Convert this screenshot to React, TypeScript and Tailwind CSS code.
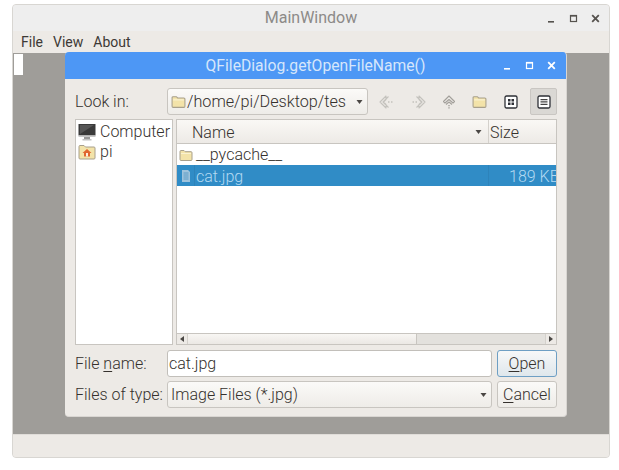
import React from "react";

const Folder = ({ className = "" }: { className?: string }) => (
  <svg viewBox="0 0 14 14" className={className}>
    <path d="M1 3.500 a1 1 0 0 1 1-1h3l1.200 1.200h5.800a1 1 0 0 1 1 1v6.800a1 1 0 0 1-1 1H2a1 1 0 0 1-1-1z" fill="#f3e3a9" stroke="#a8a08c" strokeWidth="1" />
    <path d="M2 5h10v1H2z" fill="#faf2d0" />
  </svg>
);

const WinBtns = ({ light }: { light?: boolean }) => {
  const c = light ? "#ffffff" : "#55524e";
  return (
    <div className="flex items-center gap-[13px]">
      <svg width="9" height="9" viewBox="0 0 9 9"><rect x="1" y="7" width="6" height="1.600" fill={c} /></svg>
      <svg width="9" height="9" viewBox="0 0 9 9"><rect x="1.500" y="1.500" width="6" height="6" fill="none" stroke={c} strokeWidth="1.200" /><rect x="1" y="1" width="7" height="1.600" fill={c} /></svg>
      <svg width="9" height="9" viewBox="0 0 9 9"><path d="M1.200 1.200 7.800 7.800M7.800 1.200 1.200 7.800" stroke={c} strokeWidth="1.800" /></svg>
    </div>
  );
};

const Caret = () => (
  <svg width="7" height="4" viewBox="0 0 7 4"><path d="M0.500 0h6L3.500 4z" fill="#4a4744" /></svg>
);

const Slot = ({ children }: { children: React.ReactNode }) => (
  <div className="w-[31px] shrink-0 flex items-center justify-center">{children}</div>
);

export default function App() {
  return (
    <div className="w-[619px] h-[470px] bg-white relative overflow-hidden text-[16px] font-light text-[#35312d] font-['Roboto',sans-serif] leading-none">
      <div className="absolute left-[12px] top-[4px] w-[598px] h-[454px] flex flex-col rounded-[4px] border border-[#d8d6d2] overflow-hidden bg-[#edeae6]">
        <div className="h-[26px] shrink-0 bg-[#eeeeee] relative flex items-center justify-center text-[#8c8a88] font-normal">
          MainWindow
          <div className="absolute right-[9px] top-[9px]"><WinBtns /></div>
        </div>
        <div className="h-[22px] shrink-0 flex items-center gap-[10px] pl-[8px] text-[14px] font-normal text-[#3d3935]">
          <span>File</span><span>View</span><span>About</span>
        </div>
        <div className="flex-1 bg-[#9f9d99]">
          <div className="w-[9px] h-[21px] bg-white ml-[1px] mt-px" />
        </div>
        <div className="h-[23px] shrink-0 bg-[#edeae6] border-t border-[#e0ddd9]" />
      </div>

      <div className="absolute left-[65px] top-[52px] w-[502px] h-[365px] flex flex-col rounded-[4px] overflow-hidden bg-[#edeae6] border-b border-r border-[#d9d6d2]">
        <div className="h-[27px] shrink-0 bg-[#4d97f5] relative flex items-center justify-center text-[#d6e6fb] font-normal text-[15.700px]">
          QFileDialog.getOpenFileName()
          <div className="absolute right-[10px] top-[9px]"><WinBtns light /></div>
        </div>
        <div className="flex-1 flex flex-col pl-[10px] pr-[9px] pt-[9px]">
          <div className="h-[27px] flex items-center shrink-0">
            <span className="w-[92px] shrink-0 pt-px">Look in:</span>
            <div className="w-[201px] shrink-0 h-[27px] rounded-[3px] border border-[#c8c5c0] bg-gradient-to-b from-[#fbfaf8] to-[#eeece8] flex items-center pl-[3px] pr-[4px]">
              <Folder className="w-[15px] h-[15px] shrink-0" />
              <span className="flex-1 pt-px ml-px text-[16.200px]">/home/pi/Desktop/tes</span>
              <Caret />
            </div>
            <div className="flex items-center pl-[3px]">
              <Slot>
                <svg width="16" height="14" viewBox="0 0 16 14" fill="#edeae6" stroke="#c4c2bd" strokeWidth="1.100" strokeLinejoin="round">
                  <path d="M7 1 1 7l6 6V9.500l-2.500-2.500L7 4.500zM9.500 1.500 4 7l5.500 5.500" fill="none" />
                  <path d="M9 7h1.500M12 7h1.500" strokeWidth="1.500" />
                </svg>
              </Slot>
              <Slot>
                <svg width="16" height="14" viewBox="0 0 16 14" fill="none" stroke="#c4c2bd" strokeWidth="1.100" strokeLinejoin="round">
                  <path d="M9 1l6 6-6 6V9.500L11.500 7 9 4.500zM6.500 1.500 12 7l-5.500 5.500" />
                  <path d="M7 7H5.500M4 7H2.500" strokeWidth="1.500" />
                </svg>
              </Slot>
              <Slot>
                <svg width="14" height="14" viewBox="0 0 14 14" fill="none" stroke="#a3a09b" strokeWidth="1.100" strokeLinejoin="round">
                  <path d="M7 1 1.500 6.500 3 8 7 4.500 11 8l1.500-1.500z" />
                  <path d="M4 9.500 7 7l3 2.500" />
                  <path d="M7 10v1.300M7 12.300V13.500" strokeWidth="1.400" />
                </svg>
              </Slot>
              <Slot><Folder className="w-[15px] h-[15px]" /></Slot>
              <Slot>
                <svg width="14" height="14" viewBox="0 0 14 14"><rect x="1" y="1" width="12" height="12" rx="1.500" fill="#fff" stroke="#2e3036" strokeWidth="1.300" /><path d="M4 4h2.500v2.500H4zM7.500 4H10v2.500H7.500zM4 7.500h2.500V10H4zM7.500 7.500H10V10H7.500z" fill="#2e3036" /></svg>
              </Slot>
              <div className="w-[27px] h-[27px] ml-[4px] shrink-0 rounded-[2px] bg-[#dad8d4] border border-[#c9c6c2] flex items-center justify-center">
                <svg width="14" height="14" viewBox="0 0 14 14"><rect x="1" y="1" width="12" height="12" rx="1.500" fill="#fff" stroke="#2e3036" strokeWidth="1.300" /><path d="M3.500 4h7v1.300h-7zM3.500 6.300h7v1.300h-7zM3.500 8.700h7V10h-7z" fill="#444" /></svg>
              </div>
            </div>
          </div>

          <div className="h-[226px] flex gap-[3px] mt-[4px] shrink-0">
            <div className="w-[98px] shrink-0 bg-white border border-[#c8c5c0] pl-[2px] pt-[2px]">
              <div className="flex items-center h-[20px] gap-[4px]">
                <svg width="18" height="18" viewBox="0 0 18 18" className="shrink-0">
                  <rect x="0.500" y="1" width="17" height="11.500" fill="#3a3a3a" />
                  <path d="M2 2h14L2 11z" fill="#565656" />
                  <rect x="0.500" y="12.500" width="17" height="1.500" fill="#c9c9c9" />
                  <rect x="6" y="14" width="6" height="2" fill="#9a9a9a" />
                  <rect x="4.500" y="16" width="9" height="1.500" fill="#c2c2c2" />
                </svg>
                <span>Computer</span>
              </div>
              <div className="flex items-center h-[20px] gap-[4px]">
                <svg width="18" height="16" viewBox="0 0 18 16" className="shrink-0">
                  <path d="M1 2.500a1 1 0 0 1 1-1h4l1.500 1.500H16a1 1 0 0 1 1 1V14a1 1 0 0 1-1 1H2a1 1 0 0 1-1-1z" fill="#f3e3a9" stroke="#a8a08c" />
                  <path d="M9 5 4.500 9H6v3.500h6V9h1.500z" fill="#e0662f" />
                  <rect x="8" y="9" width="2" height="3.500" fill="#fbeede" />
                </svg>
                <span>pi</span>
              </div>
            </div>
            <div className="flex-1 min-w-0 bg-white border border-[#c8c5c0] flex flex-col">
              <div className="h-[24px] shrink-0 flex bg-gradient-to-b from-[#faf8f5] to-[#edeae6] border-b border-[#c8c5c0]">
                <div className="w-[312px] shrink-0 flex items-center justify-between pl-[15px] pr-[6px] border-r border-[#d4d1cc]">
                  <span className="pt-[2px]">Name</span>
                  <Caret />
                </div>
                <div className="flex items-center pl-[1px] pt-[2px]">Size</div>
              </div>
              <div className="flex-1 min-h-0 overflow-hidden">
                <div className="h-[21px] flex items-center pl-[2px] gap-[3px]">
                  <Folder className="w-[14px] h-[14px] shrink-0" />
                  <span>__pycache__</span>
                </div>
                <div className="h-[21px] flex bg-[#308cc6] text-[#b4daf2]">
                  <div className="w-[312px] shrink-0 flex items-center pl-[2px] border-r border-[#2d83ba]">
                    <svg width="14" height="14" viewBox="0 0 14 14" className="shrink-0"><path d="M3 1h6l2 2v10H3z" fill="#9fc3dc" /><path d="M4.500 4h5M4.500 6h5M4.500 8h5M4.500 10h5" stroke="#5d9cc6" /></svg>
                    <span className="self-stretch ml-px mr-px border-l border-[#2d83ba]" />
                    <span className="pt-[2px]">cat.jpg</span>
                  </div>
                  <div className="flex-1 min-w-0 flex items-center pl-[20px] pt-[2px] whitespace-nowrap overflow-hidden">189 KB</div>
                </div>
              </div>
              <div className="h-[11px] shrink-0 flex border-t border-[#c8c5c0] bg-[#e3e1dd]">
                <div className="w-[11px] shrink-0 flex items-center justify-center bg-[#edeae6] border-r border-[#d4d1cc]">
                  <svg width="4" height="6" viewBox="0 0 4 6"><path d="M4 0v6L0 3z" fill="#4a4744" /></svg>
                </div>
                <div className="w-[229px] shrink-0 bg-gradient-to-b from-[#f8f6f3] to-[#ebe8e4] border-r border-[#c8c5c0]" />
                <div className="flex-1" />
                <div className="w-[11px] shrink-0 flex items-center justify-center bg-[#edeae6] border-l border-[#d4d1cc]">
                  <svg width="4" height="6" viewBox="0 0 4 6"><path d="M0 0v6l4-3z" fill="#4a4744" /></svg>
                </div>
              </div>
            </div>
          </div>

          <div className="h-[27px] flex items-center mt-[5px] shrink-0">
            <span className="w-[92px] shrink-0">File <span className="underline underline-offset-2">n</span>ame:</span>
            <div className="w-[325px] shrink-0 h-[27px] bg-white border border-[#c2bfba] rounded-[3px] flex items-center pl-[1px]">cat.jpg</div>
            <div className="w-[60px] shrink-0 h-[27px] ml-[5px] rounded-[3px] border border-[#6e9fc4] bg-gradient-to-b from-[#f7f8f8] to-[#dfe7ec] flex items-center justify-center">
              <span><span className="underline underline-offset-2">O</span>pen</span>
            </div>
          </div>
          <div className="h-[27px] flex items-center mt-[4px] shrink-0">
            <span className="w-[92px] shrink-0">Files of type:</span>
            <div className="w-[325px] shrink-0 h-[27px] rounded-[3px] border border-[#c8c5c0] bg-gradient-to-b from-[#fbfaf8] to-[#eeece8] flex items-center justify-between pl-[3px] pr-[4px]">
              <span>Image Files (*.jpg)</span>
              <Caret />
            </div>
            <div className="w-[60px] shrink-0 h-[27px] ml-[5px] rounded-[3px] border border-[#c8c5c0] bg-gradient-to-b from-[#fbfaf8] to-[#eeece8] flex items-center justify-center">
              <span><span className="underline underline-offset-2">C</span>ancel</span>
            </div>
          </div>
        </div>
      </div>
    </div>
  );
}
